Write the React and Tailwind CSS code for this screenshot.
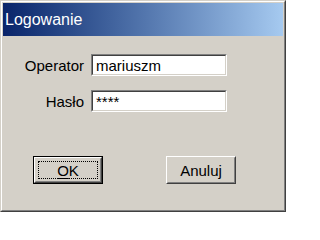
const font = { fontFamily: '"Liberation Sans", Arial, sans-serif' };

function Field({ label, value }) {
  return (
    <div className="flex items-center">
      <span className="w-[82px] pr-[1px] text-right text-[15px] text-black leading-none">{label}</span>
      <div className="ml-[6px] w-[136px] h-[22px] border border-t-[#808080] border-l-[#808080] border-b-white border-r-white">
        <div className="h-full border border-t-[#404040] border-l-[#404040] border-b-[#d4d0c8] border-r-[#d4d0c8] bg-white flex items-center pl-[3px] text-[15px] leading-none text-black">
          {value}
        </div>
      </div>
    </div>
  );
}

function Button({ children, isDefault }) {
  const inner = (
    <div className="h-full border border-t-white border-l-white border-b-[#404040] border-r-[#404040]">
      <div className="h-full border border-t-[#d4d0c8] border-l-[#d4d0c8] border-b-[#808080] border-r-[#808080] p-[2px]">
        <div
          className={
            'h-full flex items-center justify-center text-[15px] leading-none text-black ' +
            (isDefault ? 'border border-dotted border-black' : '')
          }
        >
          {children}
        </div>
      </div>
    </div>
  );
  return (
    <div className={'w-[70px] h-[28px] ' + (isDefault ? 'border border-black' : '')}>
      {inner}
    </div>
  );
}

export default function App() {
  return (
    <div className="w-[286px] h-[212px] bg-[#d4d0c8]" style={font}>
      <div className="h-full border border-t-[#d4d0c8] border-l-[#d4d0c8] border-b-[#404040] border-r-[#404040]">
        <div className="h-full border border-t-white border-l-white border-b-[#808080] border-r-[#808080] p-[1px] flex flex-col">
          <div className="h-[33px] flex items-center pl-[2px] bg-gradient-to-r from-[#0a246a] to-[#a6caf0]">
            <span className="text-white text-[16px] leading-none">Logowanie</span>
          </div>
          <div className="flex flex-col gap-[14px] pt-[18px]">
            <Field label="Operator" value="mariuszm" />
            <Field label="Hasło" value="****" />
          </div>
          <div className="flex mt-[44px] pl-[30px] gap-[63px]">
            <Button isDefault>
              <span><span className="underline underline-offset-2">O</span>K</span>
            </Button>
            <Button>Anuluj</Button>
          </div>
        </div>
      </div>
    </div>
  );
}
